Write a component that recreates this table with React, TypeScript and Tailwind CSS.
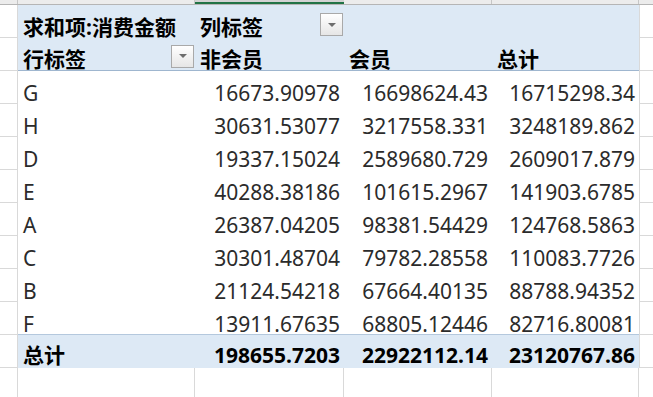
import React from 'react';

const ROWS: [string, string, string, string][] = [
  ['G', '16673.90978', '16698624.43', '16715298.34'],
  ['H', '30631.53077', '3217558.331', '3248189.862'],
  ['D', '19337.15024', '2589680.729', '2609017.879'],
  ['E', '40288.38186', '101615.2967', '141903.6785'],
  ['A', '26387.04205', '98381.54429', '124768.5863'],
  ['C', '30301.48704', '79782.28558', '110083.7726'],
  ['B', '21124.54218', '67664.40135', '88788.94352'],
  ['F', '13911.67635', '68805.12446', '82716.80081'],
];

const COLS = 'grid grid-cols-[18px_177px_149px_148px_147px_14px] grid-rows-[33px] h-[33px]';

const Dropdown: React.FC = () => (
  <div className="w-[23px] h-[23px] border border-[#a9a9a9] bg-gradient-to-b from-white to-[#e6e6e6] flex items-center justify-center">
    <div className="w-0 h-0 border-l-[4px] border-r-[4px] border-t-[4px] border-l-transparent border-r-transparent border-t-[#6d6d6d]" />
  </div>
);

const App: React.FC = () => {
  return (
    <div
      className="w-[653px] h-[397px] bg-white text-[21px] leading-[22px] text-[#2b2b2b]"
      style={{ fontFamily: '"Noto Sans", "Noto Sans CJK SC", sans-serif' }}
    >
      {/* column header strip */}
      <div className="grid grid-cols-[18px_177px_149px_148px_147px_14px] h-[5px] bg-[#ececec] border-b border-[#b5b5b5]">
        <div className="border-r border-[#c6c6c6]" />
        <div className="border-r border-[#c6c6c6]" />
        <div className="bg-[#d3d3d3] border-b-2 border-[#217346]" />
        <div className="border-r border-[#c6c6c6]" />
        <div className="border-r border-[#c6c6c6]" />
        <div />
      </div>

      {/* header row 1 */}
      <div className={COLS}>
        <div className="border-r border-b border-[#d9d9d9]" />
        <div className="bg-[#dde9f5] flex items-center pl-[5px] font-bold text-black whitespace-nowrap">
          <span className="mt-[10px]">求和项:消费金额</span>
        </div>
        <div className="bg-[#dde9f5] flex items-center justify-between pl-[5px] pr-[1px] font-bold text-black">
          <span className="mt-[10px]">列标签</span>
          <div className="mt-[6px]">
            <Dropdown />
          </div>
        </div>
        <div className="bg-[#dde9f5]" />
        <div className="bg-[#dde9f5]" />
        <div className="border-l border-b border-[#d9d9d9]" />
      </div>

      {/* header row 2 */}
      <div className={COLS}>
        <div className="border-r border-b border-[#d9d9d9]" />
        <div className="bg-[#dde9f5] border-b border-[#9fb6cf] flex items-center justify-between pl-[5px] pr-[1px] font-bold text-black">
          <span className="mt-[10px]">行标签</span>
          <div className="mt-[4px]">
            <Dropdown />
          </div>
        </div>
        <div className="bg-[#dde9f5] border-b border-[#9fb6cf] flex items-center pl-[5px] font-bold text-black">
          <span className="mt-[10px]">非会员</span>
        </div>
        <div className="bg-[#dde9f5] border-b border-[#9fb6cf] flex items-center pl-[5px] font-bold text-black">
          <span className="mt-[10px]">会员</span>
        </div>
        <div className="bg-[#dde9f5] border-b border-[#9fb6cf] flex items-center pl-[5px] font-bold text-black">
          <span className="mt-[10px]">总计</span>
        </div>
        <div className="border-l border-b border-[#d9d9d9]" />
      </div>

      {/* data rows */}
      {ROWS.map((r, i) => {
        const last = i === ROWS.length - 1 ? 'border-b border-[#b4c8dd]' : '';
        return (
          <div key={r[0]} className={COLS}>
            <div className="border-r border-b border-[#d9d9d9]" />
            <div className={`flex items-center pl-[5px] ${last}`}>
              <span className="mt-[11px]">{r[0]}</span>
            </div>
            {r.slice(1).map((v, j) => (
              <div key={j} className={`flex items-center justify-end pr-[4px] ${last}`}>
                <span className="mt-[11px]">{v}</span>
              </div>
            ))}
            <div className="border-l border-b border-[#d9d9d9]" />
          </div>
        );
      })}

      {/* grand total */}
      <div className={`${COLS} font-bold text-black`}>
        <div className="border-r border-b border-[#d9d9d9]" />
        <div className="bg-[#dde9f5] flex items-center pl-[5px]">
          <span className="mt-[7px]">总计</span>
        </div>
        <div className="bg-[#dde9f5] flex items-center justify-end pr-[4px]">
          <span className="mt-[7px]">198655.7203</span>
        </div>
        <div className="bg-[#dde9f5] flex items-center justify-end pr-[4px]">
          <span className="mt-[7px]">22922112.14</span>
        </div>
        <div className="bg-[#dde9f5] flex items-center justify-end pr-[4px]">
          <span className="mt-[7px]">23120767.86</span>
        </div>
        <div className="border-l border-b border-[#d9d9d9]" />
      </div>

      {/* empty row below */}
      <div className={COLS}>
        <div className="border-r border-b border-[#d9d9d9]" />
        <div className="border-r border-b border-[#d9d9d9]" />
        <div className="border-r border-b border-[#d9d9d9]" />
        <div className="border-r border-b border-[#d9d9d9]" />
        <div className="border-r border-b border-[#d9d9d9]" />
        <div className="border-b border-[#d9d9d9]" />
      </div>
    </div>
  );
};

export default App;
